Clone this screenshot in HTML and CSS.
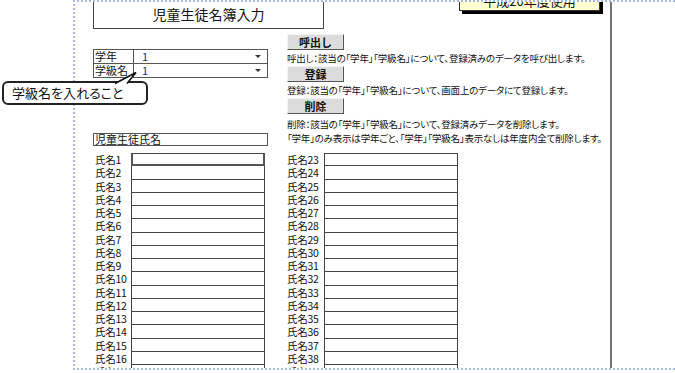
FILE: index.html
```html
<!DOCTYPE html>
<html lang="ja">
<head>
<meta charset="UTF-8">
<title>児童生徒名簿入力</title>
<link rel="stylesheet" href="styles.css">
</head>
<body>

<div class="sheet">
    <div class="main">
        <div class="header">
            <div class="title">児童生徒名簿入力</div>
            <div class="year">平成20年度使用</div>
        </div>

        <div class="top">
            <div class="left">
                <div class="class-table">
                    <div class="field">
                        <span class="field-label">学年</span>
                        <span class="field-value">1<i class="arrow"></i></span>
                    </div>
                    <div class="field">
                        <span class="field-label">学級名</span>
                        <span class="field-value">1<i class="arrow"></i></span>
                    </div>
                </div>
                <div class="roster-title">児童生徒氏名</div>
            </div>
            <div class="right">
                <button class="btn">呼出し</button>
                <p class="desc">呼出し：該当の「学年」「学級名」について、登録済みのデータを呼び出します。</p>
                <button class="btn">登録</button>
                <p class="desc">登録：該当の「学年」「学級名」について、画面上のデータにて登録します。</p>
                <button class="btn">削除</button>
                <p class="desc desc-first">削除：該当の「学年」「学級名」について、登録済みデータを削除します。</p>
                <p class="desc">「学年」のみ表示は学年ごと、「学年」「学級名」表示なしは年度内全て削除します。</p>
            </div>
        </div>

        <div class="lists">
            <div class="list" id="listLeft"></div>
            <div class="list list-right" id="listRight"></div>
        </div>
    </div>
</div>

<div class="callout">
    学級名を入れること
    <svg class="tail" width="26" height="14" viewBox="0 0 26 14">
        <polygon points="2,13 14,13 23,2" fill="#fff"/>
        <polyline points="2,12.5 23,1.5 14,12.5" fill="none" stroke="#111" stroke-width="1.6"/>
    </svg>
</div>

<script>
    function fillList(id, start, count) {
        var list = document.getElementById(id);
        for (var i = 0; i < count; i++) {
            var row = document.createElement('div');
            row.className = 'row' + (i == 0 ? ' first' : '');
            row.innerHTML = '<span class="name-label">氏名' + (start + i) + '</span><span class="name-box"></span>';
            list.appendChild(row);
        }
    }
    fillList('listLeft', 1, 17);
    fillList('listRight', 23, 17);
    document.querySelector('#listLeft .name-box').classList.add('active');
</script>

</body>
</html>
```

FILE: styles.css
```css
body {
    margin: 0;
    background: #fff;
    color: #111;
    font-family: "Noto Sans CJK JP", sans-serif;
    font-feature-settings: "palt";
    overflow: hidden;
    height: 373px;
    position: relative;
}
.sheet {
    margin-left: 73px;
    height: 366px;
    border-left: 2px dotted #a8b6e4;
    border-top: 2px dotted #a8b6e4;
    border-bottom: 2px dotted #a8b6e4;
    padding-left: 18px;
    display: flex;
}
.main {
    width: 517px;
    height: 100%;
    border-right: 2px solid #777;
    overflow: hidden;
}
.header {
    display: flex;
    height: 29px;
}
.title {
    width: 231px;
    height: 27px;
    box-sizing: border-box;
    border: 1px solid #444;
    border-top: none;
    font-size: 14px;
    line-height: 25px;
    text-align: center;
}
.year {
    margin-left: 135px;
    margin-top: -9px;
    width: 139px;
    height: 16px;
    background: #ffffd2;
    border: 1px solid #333;
    box-shadow: 3px 3px 0 #000;
    font-size: 13px;
    line-height: 14px;
    text-align: center;
}
.top {
    display: grid;
    grid-template-columns: 194px 1fr;
}
.left {
    padding-top: 18px;
}
.class-table {
    width: 173px;
    border: 1px solid #555;
}
.field {
    display: flex;
    height: 13px;
    font-size: 11px;
    line-height: 13px;
}
.field + .field {
    border-top: 1px solid #555;
}
.field-label {
    width: 38px;
    padding-left: 1px;
    border-right: 1px solid #555;
}
.field-value {
    flex: 1;
    position: relative;
    padding-left: 8px;
    color: #1b2a8c;
}
.arrow {
    position: absolute;
    right: 6px;
    top: 5px;
    border-left: 3px solid transparent;
    border-right: 3px solid transparent;
    border-top: 3px solid #333;
}
.roster-title {
    margin-top: 55px;
    width: 175px;
    height: 13px;
    box-sizing: border-box;
    border: 1px solid #555;
    font-size: 11px;
    line-height: 11px;
    padding-left: 1px;
}
.right {
    padding-top: 3px;
    display: flex;
    flex-direction: column;
    align-items: flex-start;
}
.btn {
    width: 57px;
    height: 16px;
    padding: 0;
    font-family: inherit;
    font-size: 11px;
    font-weight: bold;
    line-height: 14px;
    background: #dcdcdc;
    border: 1px solid;
    border-color: #f4f4f4 #555 #555 #f4f4f4;
    color: #111;
}
.desc {
    margin: 0;
    font-size: 9.5px;
    line-height: 16px;
    white-space: nowrap;
    letter-spacing: -0.2px;
}
.desc-first {
    margin-top: 3px;
    line-height: 14px;
}
.desc-first + .desc {
    line-height: 14px;
}
.lists {
    margin-top: 7px;
    display: grid;
    grid-template-columns: 194px 194px;
}
.row {
    display: flex;
    height: 13.25px;
    font-size: 10.5px;
    line-height: 13px;
}
.name-label {
    width: 36px;
    padding-left: 2px;
    letter-spacing: -0.3px;
    white-space: nowrap;
}
.list-right .name-label {
    width: 37px;
    padding-left: 0;
}
.name-box {
    width: 134px;
    box-sizing: border-box;
    border: 1px solid #444;
    border-top: none;
}
.row.first .name-box {
    border-top: 1px solid #444;
}
.name-box.active {
    border: 2px solid #555;
}
.callout {
    position: absolute;
    left: 2px;
    top: 81px;
    width: 146px;
    height: 24px;
    box-sizing: border-box;
    border: 2px solid #222;
    border-radius: 6px;
    background: #fff;
    font-size: 13px;
    line-height: 20px;
    padding-left: 8px;
}
.tail {
    position: absolute;
    left: 109px;
    top: -12px;
}
```
